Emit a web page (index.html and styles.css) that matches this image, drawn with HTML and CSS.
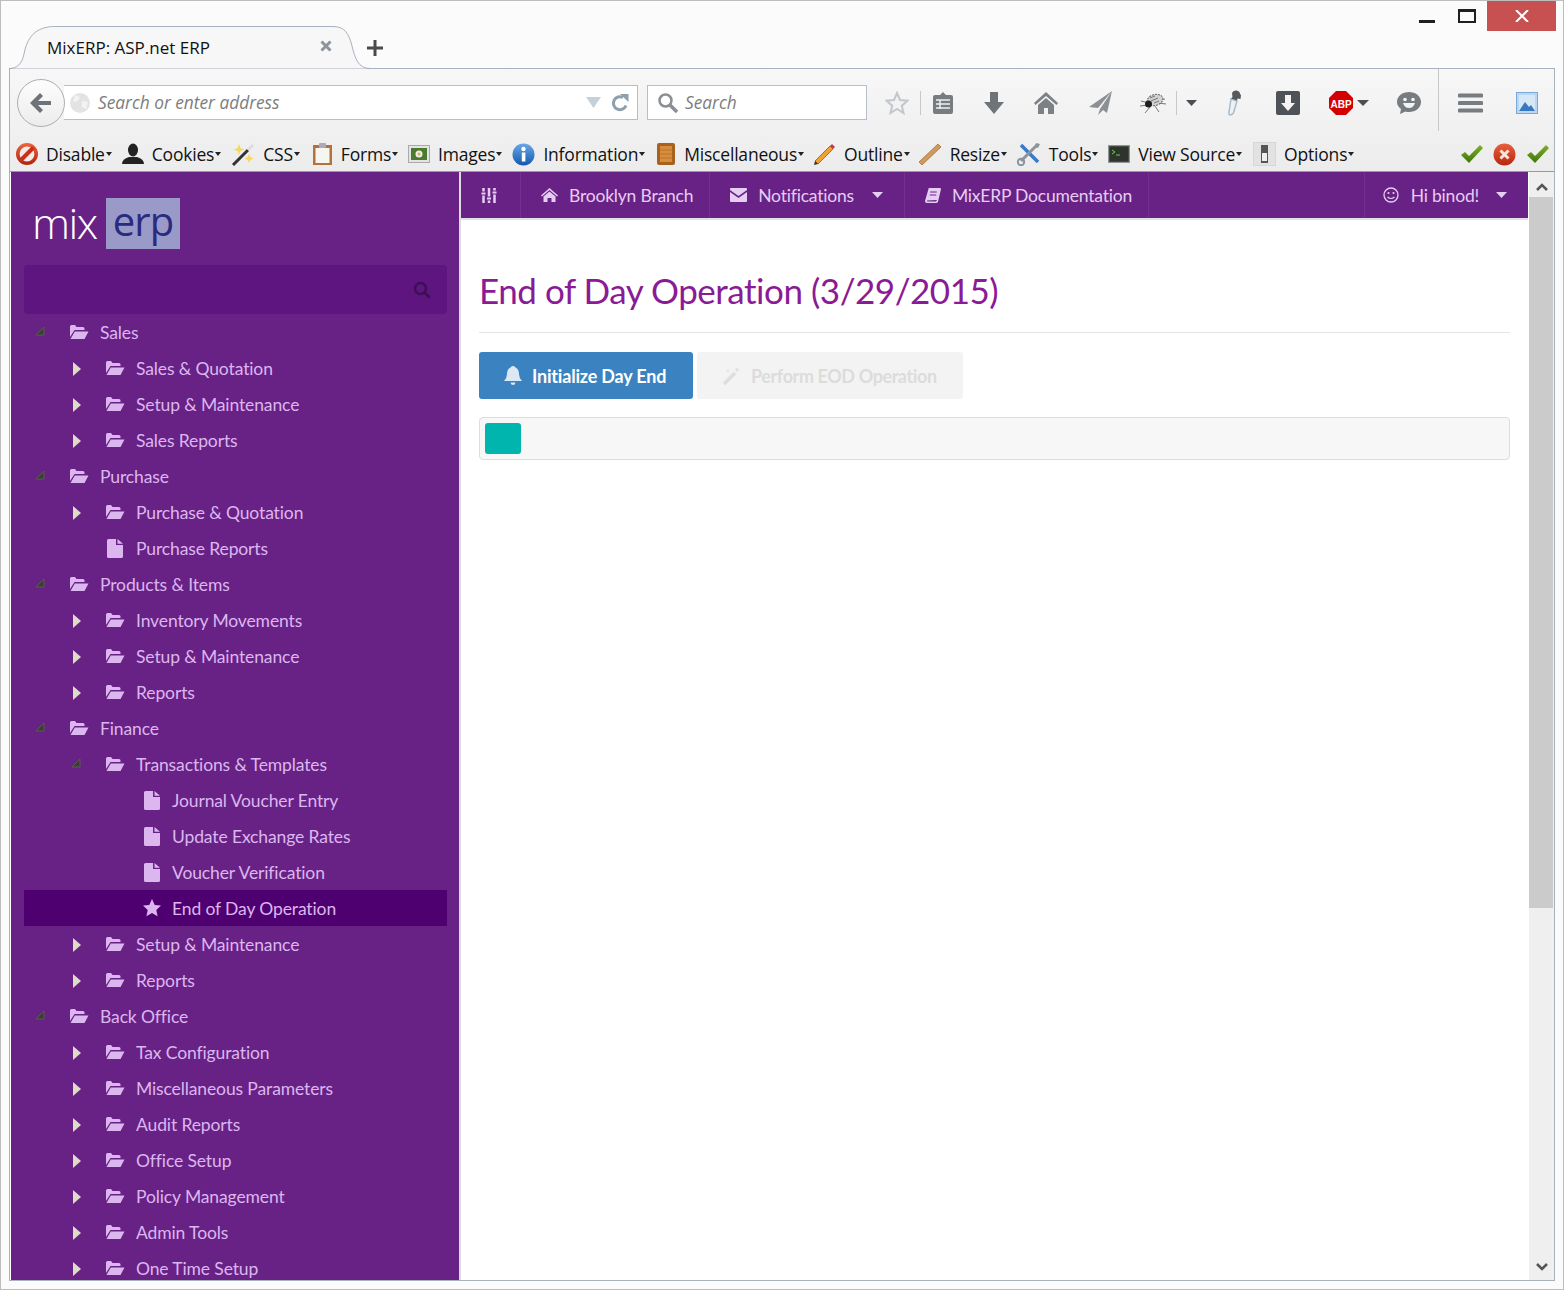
FILE: index.html
```html
<!DOCTYPE html>
<html>
<head>
  <meta charset="UTF-8">
  <title>MixERP: ASP.net ERP</title>
  <link rel="stylesheet" href="styles.css">
</head>
<body>
  <svg class="defs" width="0" height="0">
    <defs>
      <linearGradient id="gloss-blue" x1="0" y1="0" x2="0" y2="1"><stop offset="0" stop-color="#6aa8e6"/><stop offset="1" stop-color="#1258ae"/></linearGradient>
      <linearGradient id="gloss-red" x1="0" y1="0" x2="0" y2="1"><stop offset="0" stop-color="#e8603c"/><stop offset="1" stop-color="#b8260e"/></linearGradient>
      <linearGradient id="gloss-green" x1="0" y1="0" x2="0" y2="1"><stop offset="0" stop-color="#7fb02c"/><stop offset="1" stop-color="#3f7408"/></linearGradient>
    </defs>
    <symbol id="folder" viewBox="0 0 20 16"><path d="M1 13V2.500Q1 1 2.500 1h3.500l1.500 2h6.500Q15.500 3 15.500 4.500V6H5.500L1 13zM1.500 15L5.800 7.500H19.500L15.500 15z" fill="currentColor"/></symbol>
    <symbol id="file" viewBox="0 0 16 19"><path d="M0 1.500Q0 0 1.500 0H9v6h7v11.500Q16 19 14.500 19h-13Q0 19 0 17.500zM10.500 0L16 4.800H10.500z" fill="currentColor"/></symbol>
    <symbol id="arrow" viewBox="0 0 8 14"><path d="M0 0l8 7-8 7z" fill="#dcdcc8"/></symbol>
    <symbol id="open" viewBox="0 0 10 10"><path d="M9 1v8H1z" fill="#3b3b3b" stroke="#5f5a50"/></symbol>
  </svg>
  <div class="window">
    <div class="titlebar">
      <div class="tab">
        <svg class="tab-shape" width="362" height="43" viewBox="0 0 362 43"><path d="M0 42.500C8 42.500 13 38 15 28 18 12 26 .5 46 .5H324C336 .5 340 8 343 20 346 32 349 42.500 361 42.500" fill="#f7f7f7" stroke="#a9b1bc"/></svg>
        <span class="tab-title">MixERP: ASP.net ERP</span>
        <svg class="tab-close" width="12" height="12" viewBox="0 0 12 12"><path d="M1.500 1.500l9 9M10.500 1.500l-9 9" stroke="#8c939b" stroke-width="3"/></svg>
      </div>
      <svg class="tab-new" width="16" height="16" viewBox="0 0 16 16"><path d="M8 0v16M0 8h16" stroke="#4a4a4a" stroke-width="3"/></svg>
      <div class="controls">
        <span class="ctl-min"></span>
        <span class="ctl-max"></span>
        <span class="ctl-close"><svg width="14" height="12" viewBox="0 0 14 12"><path d="M1 0l12 12M13 0L1 12" stroke="#fff" stroke-width="2"/></svg></span>
      </div>
    </div>

    <div class="browser">
      <div class="chrome">
        <div class="navbar">
          <div class="back">
            <svg width="24" height="22" viewBox="0 0 24 22"><path d="M11 1l3 3-5 5h13v4H9l5 5-3 3L1 11z" fill="#6e7378"/></svg>
          </div>
          <div class="urlbar">
            <svg class="globe" width="22" height="22" viewBox="0 0 22 22"><circle cx="11" cy="11" r="10" fill="#e3e3e3"/><path d="M6 3l5 2-2 4-5 1zM13 9l6 1-2 7-4-2z" fill="#f3f3f3"/></svg>
            <span class="hint">Search or enter address</span>
            <svg class="url-drop" width="15" height="11" viewBox="0 0 15 11"><path d="M0 0h15l-7.500 11z" fill="#c5d0d8"/></svg>
            <svg width="18" height="18" viewBox="0 0 18 18"><path d="M15 11.500A6.500 6.500 0 1 1 12 3.500" fill="none" stroke="#8ea0ae" stroke-width="3"/><path d="M9 0h8.500v8z" fill="#8ea0ae"/></svg>
          </div>
          <div class="searchbar">
            <svg width="22" height="22" viewBox="0 0 22 22"><circle cx="8.500" cy="8.500" r="6" fill="none" stroke="#8a8f94" stroke-width="2.500"/><path d="M13 13l7 7" stroke="#8a8f94" stroke-width="3.500"/></svg>
            <span class="hint">Search</span>
          </div>
          <div class="tools">
            <svg class="t-star" width="24" height="24" viewBox="0 0 24 24"><path d="M12 2l3 7 7.500.7-5.700 5 1.700 7.300L12 18l-6.500 4 1.700-7.300-5.700-5L9 9z" fill="#f2f2f2" stroke="#c3c7cb" stroke-width="2"/></svg>
            <span class="t-sep t-sep1"></span>
            <svg class="t-clip" width="22" height="24" viewBox="0 0 22 24"><path d="M3 4h5l3-3 3 3h5q2 0 2 2v15q0 2-2 2H3q-2 0-2-2V6q0-2 2-2z" fill="#777c81"/><path d="M4 9h14M4 13h14M4 17h14M8 9v9" stroke="#f0f0f0" stroke-width="1.500"/></svg>
            <svg class="t-down" width="22" height="22" viewBox="0 0 22 22"><path d="M7 0h8v10h6L11 22 1 10h6z" fill="#6f7479"/></svg>
            <svg class="t-home" width="26" height="22" viewBox="0 0 26 22"><path d="M13 0l12 11-1.500 2L13 4 2.500 13 1 11zM5 13l8-7 8 7v9h-6v-6h-4v6H5z" fill="#7d8186"/></svg>
            <svg class="t-plane" width="24" height="24" viewBox="0 0 24 24"><path d="M23 0L0 16l9 1zM23 0L11 18l-2 6 5-5 4 3z" fill="#8c9095"/></svg>
            <svg class="t-bug" width="26" height="22" viewBox="0 0 26 22"><path d="M1 9l8 2M0 14l8-1M5 21l5-6M25 7l-7 1M26 12l-8-1M19 20l-4-6" stroke="#555" stroke-width=".8" fill="none"/><ellipse cx="15" cy="8" rx="8" ry="5.500" fill="#d2d2d2" stroke="#666" stroke-dasharray="2 1" transform="rotate(-15 15 8)"/><path d="M10 6l5-2M11 9l7-3M14 11l5-2" stroke="#777"/><circle cx="8.500" cy="12" r="3.500" fill="#1e1e1e"/></svg>
            <span class="t-sep t-sep2"></span>
            <svg class="t-caret" width="11" height="6" viewBox="0 0 11 6"><path d="M0 0h11L5.500 6z" fill="#4b4f53"/></svg>
            <svg class="t-drop" width="18" height="26" viewBox="0 0 18 26"><path d="M6 9l6 2-3.500 12q-1.500 2-4 2-1-1-.5-3z" fill="#eef2f5" stroke="#a8bccc" stroke-width="1.500"/><path d="M7 3q1-3 4.500-2.500T15 4l1 1-.5 4-3-.5-.5 2-6-2 1.500-1.500z" fill="#55595e"/></svg>
            <svg class="t-box" width="24" height="24" viewBox="0 0 24 24"><rect width="24" height="24" rx="2" fill="#4f5256"/><path d="M9 4h6v8h4l-7 8-7-8h4z" fill="#f4f4f4"/></svg>
            <svg class="t-abp" width="26" height="26" viewBox="0 0 26 26"><path d="M8 1h10l7 7v10l-7 7H8l-7-7V8z" fill="#d40000"/><text x="13" y="17.500" text-anchor="middle" class="abp-text">ABP</text></svg>
            <svg class="t-caret t-caret2" width="12" height="6" viewBox="0 0 12 6"><path d="M0 0h12L6 6z" fill="#4b4f53"/></svg>
            <svg class="t-chat" width="24" height="24" viewBox="0 0 24 24"><path d="M12 1c6.500 0 12 4 12 10s-5.500 10-12 10q-2 0-3.500-.5L3 23l1-5Q0 15 0 11C0 5 5.500 1 12 1z" fill="#777c81"/><circle cx="8" cy="8.500" r="1.800" fill="#f3f3f3"/><circle cx="16" cy="8.500" r="1.800" fill="#f3f3f3"/><path d="M6 12h12q-1.500 5-6 5t-6-5z" fill="#f3f3f3"/></svg>
            <span class="t-sep t-sep3"></span>
            <svg class="t-menu" width="25" height="20" viewBox="0 0 25 20"><path d="M1.500 2.500h22M1.500 10h22M1.500 17.500h22" stroke="#777c81" stroke-width="4" stroke-linecap="round"/></svg>
            <svg class="t-pic" width="22" height="22" viewBox="0 0 22 22"><rect x=".5" y=".5" width="21" height="21" fill="#b9d6f2" stroke="#7da7d8"/><rect x="3" y="3" width="16" height="16" fill="#d6e8f8"/><path d="M3 19l6-9 4 5 2-2 4 6z" fill="#3a79c2"/></svg>
          </div>
        </div>

        <div class="addons">
          <span class="addon">
            <svg width="22" height="22" viewBox="0 0 22 22"><circle cx="11" cy="11" r="9.200" fill="#f1ebe6" stroke="url(#gloss-red)" stroke-width="3.600"/><path d="M4.500 17.500L17.500 4.500" stroke="#c8321c" stroke-width="4"/></svg>
            <span class="addon-text">Disable</span>
          </span>
          <span class="addon">
            <svg width="22" height="22" viewBox="0 0 22 22"><ellipse cx="11" cy="7" rx="5" ry="6.500" fill="#222"/><path d="M0 21q0-5 7-7h8q7 2 7 7z" fill="#222"/></svg>
            <span class="addon-text">Cookies</span>
          </span>
          <span class="addon">
            <svg width="24" height="24" viewBox="0 0 24 24"><path d="M2 23L17 8" stroke="#333" stroke-width="3"/><path d="M17 8l5-5" stroke="#ddd" stroke-width="3"/><path d="M8 2l1.500 4 4 1.500-4 1.500L8 13l-1.500-4-4-1.500 4-1.500zM18 12l1.500 3 3 1.500-3 1.500-1.500 3-1.500-3-3-1.500 3-1.500z" fill="#f6d860"/></svg>
            <span class="addon-text">CSS</span>
          </span>
          <span class="addon">
            <svg width="21" height="24" viewBox="0 0 21 24"><rect x="1" y="3" width="19" height="20" fill="#b7703a"/><rect x="3.500" y="6" width="14" height="15" fill="#f6f6f0"/><rect x="7" y="1" width="7" height="5" rx="1" fill="#aab"/></svg>
            <span class="addon-text">Forms</span>
          </span>
          <span class="addon">
            <svg width="22" height="18" viewBox="0 0 22 18"><rect x=".5" y=".5" width="21" height="17" fill="#e4e4e4" stroke="#aaa"/><rect x="3" y="3" width="16" height="12" fill="#4c7a2e"/><circle cx="11" cy="9" r="3.500" fill="#eee"/><circle cx="11" cy="9" r="1.500" fill="#e0b030"/></svg>
            <span class="addon-text">Images</span>
          </span>
          <span class="addon">
            <svg width="23" height="23" viewBox="0 0 23 23"><circle cx="11.500" cy="11.500" r="11" fill="url(#gloss-blue)"/><rect x="9.800" y="9.500" width="3.600" height="9" fill="#fff"/><circle cx="11.500" cy="6" r="2.200" fill="#fff"/></svg>
            <span class="addon-text">Information</span>
          </span>
          <span class="addon">
            <svg width="20" height="24" viewBox="0 0 20 24"><rect x="1" y="1" width="18" height="22" rx="2" fill="#a8621f"/><rect x="4" y="4" width="12" height="16" fill="#d98c3c"/><path d="M4 8h12M4 12h12M4 16h12" stroke="#b9742c"/></svg>
            <span class="addon-text">Miscellaneous</span>
          </span>
          <span class="addon">
            <svg width="24" height="24" viewBox="0 0 24 24"><path d="M3 19L18 4l3 3L6 22z" fill="#f0a030" stroke="#b87010"/><path d="M18 4l2-2 3 3-2 2z" fill="#c03a4a"/><path d="M3 19l3 3-4 1z" fill="#333"/></svg>
            <span class="addon-text">Outline</span>
          </span>
          <span class="addon">
            <svg width="24" height="24" viewBox="0 0 24 24"><path d="M1 20L20 2l3 3L4 23z" fill="#cf9a5e" stroke="#a8743c" stroke-width=".8"/></svg>
            <span class="addon-text">Resize</span>
          </span>
          <span class="addon">
            <svg width="24" height="24" viewBox="0 0 24 24"><path d="M4 3l17 17" stroke="#3a7ac8" stroke-width="3.500"/><path d="M20 3L4 19" stroke="#8b949c" stroke-width="3"/><circle cx="4" cy="20" r="3.200" fill="none" stroke="#8b949c" stroke-width="2"/><path d="M19 1l4 1-2 4-3-1z" fill="#8b949c"/></svg>
            <span class="addon-text">Tools</span>
          </span>
          <span class="addon">
            <svg width="22" height="18" viewBox="0 0 22 18"><rect x=".5" y=".5" width="21" height="17" fill="#2c342c" stroke="#8f9391" stroke-width="1.500"/><path d="M4 5l3 2-3 2M8 10h4" stroke="#6fcf4a" fill="none"/></svg>
            <span class="addon-text">View Source</span>
          </span>
          <span class="addon">
            <svg width="23" height="24" viewBox="0 0 23 24"><rect width="23" height="24" fill="#e2e2e2" stroke="#ccc"/><rect x="8" y="3" width="7" height="18" fill="#555"/><rect x="9" y="11" width="5" height="8" fill="#eee"/></svg>
            <span class="addon-text">Options</span>
          </span>
          <span class="addon-end">
            <svg width="23" height="20" viewBox="0 0 23 20"><path d="M1 11l4-3 4 4L20 1l3 3L9 19z" fill="url(#gloss-green)"/></svg>
            <svg width="23" height="23" viewBox="0 0 23 23"><circle cx="11.500" cy="11.500" r="11" fill="url(#gloss-red)"/><path d="M7.500 7.500l8 8M15.500 7.500l-8 8" stroke="#f6e6e0" stroke-width="3"/></svg>
            <svg width="23" height="20" viewBox="0 0 23 20"><path d="M1 11l4-3 4 4L20 1l3 3L9 19z" fill="url(#gloss-green)"/></svg>
          </span>
        </div>
      </div>

      <div class="content">
        <aside class="sidebar">
          <div class="logo"><span class="logo-mix">mix</span><span class="logo-erp">erp</span></div>
          <div class="side-search">
            <svg width="18" height="18" viewBox="0 0 18 18"><circle cx="7.500" cy="7.500" r="5.500" fill="none" stroke="#3e0f56" stroke-width="2.500"/><path d="M11.500 11.500l5 5" stroke="#3e0f56" stroke-width="3"/></svg>
          </div>
          <ul class="tree">
            <li class="row"><svg class="tog tog-open"><use href="#open"/></svg><svg class="ico"><use href="#folder"/></svg><span>Sales</span></li>
            <li class="row lv1"><svg class="tog"><use href="#arrow"/></svg><svg class="ico"><use href="#folder"/></svg><span>Sales &amp; Quotation</span></li>
            <li class="row lv1"><svg class="tog"><use href="#arrow"/></svg><svg class="ico"><use href="#folder"/></svg><span>Setup &amp; Maintenance</span></li>
            <li class="row lv1"><svg class="tog"><use href="#arrow"/></svg><svg class="ico"><use href="#folder"/></svg><span>Sales Reports</span></li>
            <li class="row"><svg class="tog tog-open"><use href="#open"/></svg><svg class="ico"><use href="#folder"/></svg><span>Purchase</span></li>
            <li class="row lv1"><svg class="tog"><use href="#arrow"/></svg><svg class="ico"><use href="#folder"/></svg><span>Purchase &amp; Quotation</span></li>
            <li class="row lv1"><span class="tog"></span><svg class="ico ico-file"><use href="#file"/></svg><span>Purchase Reports</span></li>
            <li class="row"><svg class="tog tog-open"><use href="#open"/></svg><svg class="ico"><use href="#folder"/></svg><span>Products &amp; Items</span></li>
            <li class="row lv1"><svg class="tog"><use href="#arrow"/></svg><svg class="ico"><use href="#folder"/></svg><span>Inventory Movements</span></li>
            <li class="row lv1"><svg class="tog"><use href="#arrow"/></svg><svg class="ico"><use href="#folder"/></svg><span>Setup &amp; Maintenance</span></li>
            <li class="row lv1"><svg class="tog"><use href="#arrow"/></svg><svg class="ico"><use href="#folder"/></svg><span>Reports</span></li>
            <li class="row"><svg class="tog tog-open"><use href="#open"/></svg><svg class="ico"><use href="#folder"/></svg><span>Finance</span></li>
            <li class="row lv1"><svg class="tog tog-open"><use href="#open"/></svg><svg class="ico"><use href="#folder"/></svg><span>Transactions &amp; Templates</span></li>
            <li class="row lv2"><svg class="ico ico-file"><use href="#file"/></svg><span>Journal Voucher Entry</span></li>
            <li class="row lv2"><svg class="ico ico-file"><use href="#file"/></svg><span>Update Exchange Rates</span></li>
            <li class="row lv2"><svg class="ico ico-file"><use href="#file"/></svg><span>Voucher Verification</span></li>
            <li class="row lv2 active"><svg class="ico ico-file ico-star" viewBox="0 0 18 18"><path d="M9 0l2.700 5.900 6.300.7-4.700 4.300 1.300 6.400L9 14l-5.600 3.300 1.300-6.400L0 6.600l6.300-.7z" fill="currentColor"/></svg><span>End of Day Operation</span></li>
            <li class="row lv1"><svg class="tog"><use href="#arrow"/></svg><svg class="ico"><use href="#folder"/></svg><span>Setup &amp; Maintenance</span></li>
            <li class="row lv1"><svg class="tog"><use href="#arrow"/></svg><svg class="ico"><use href="#folder"/></svg><span>Reports</span></li>
            <li class="row"><svg class="tog tog-open"><use href="#open"/></svg><svg class="ico"><use href="#folder"/></svg><span>Back Office</span></li>
            <li class="row lv1"><svg class="tog"><use href="#arrow"/></svg><svg class="ico"><use href="#folder"/></svg><span>Tax Configuration</span></li>
            <li class="row lv1"><svg class="tog"><use href="#arrow"/></svg><svg class="ico"><use href="#folder"/></svg><span>Miscellaneous Parameters</span></li>
            <li class="row lv1"><svg class="tog"><use href="#arrow"/></svg><svg class="ico"><use href="#folder"/></svg><span>Audit Reports</span></li>
            <li class="row lv1"><svg class="tog"><use href="#arrow"/></svg><svg class="ico"><use href="#folder"/></svg><span>Office Setup</span></li>
            <li class="row lv1"><svg class="tog"><use href="#arrow"/></svg><svg class="ico"><use href="#folder"/></svg><span>Policy Management</span></li>
            <li class="row lv1"><svg class="tog"><use href="#arrow"/></svg><svg class="ico"><use href="#folder"/></svg><span>Admin Tools</span></li>
            <li class="row lv1"><svg class="tog"><use href="#arrow"/></svg><svg class="ico"><use href="#folder"/></svg><span>One Time Setup</span></li>
          </ul>
        </aside>

        <main class="main">
          <nav class="topbar">
            <a class="top-item top-settings">
              <svg width="16" height="15" viewBox="0 0 16 15"><path d="M2.500 0v15M8 0v15M13.500 0v15" stroke="currentColor" stroke-width="2.500"/><path d="M0 4h5v3H0zM5.500 9h5v3h-5zM11 3h5v3h-5z" fill="currentColor" stroke="#682286"/></svg>
            </a>
            <a class="top-item">
              <svg width="17" height="14" viewBox="0 0 17 14"><path d="M8.500 0l8.500 7.500-1 1-7.500-6.500L1 8.500l-1-1zM2.500 8.500l6-5 6 5V14h-4v-4h-4v4h-4z" fill="currentColor"/></svg>
              <span>Brooklyn Branch</span>
            </a>
            <a class="top-item">
              <svg width="17" height="14" viewBox="0 0 18 14" preserveAspectRatio="none"><path d="M1 0h16q1 0 1 1v1L9 8 0 2V1q0-1 1-1zM0 4l9 6 9-6v9q0 1-1 1H1q-1 0-1-1z" fill="currentColor"/></svg>
              <span>Notifications</span>
              <svg class="top-caret" width="11" height="6" viewBox="0 0 11 6"><path d="M0 0h11L5.500 6z" fill="currentColor"/></svg>
            </a>
            <a class="top-item">
              <svg width="16" height="15" viewBox="0 0 17 15" preserveAspectRatio="none"><path d="M4 0h12q1 0 1 1l-3 12q0 2-2 2H2q-2 0-2-2zM2 12.500q0 1 1 1h9l.5-1.500z" fill="currentColor" fill-rule="evenodd"/><path d="M5.500 4h7M5 7h7" stroke="#682286"/></svg>
              <span>MixERP Documentation</span>
            </a>
            <a class="top-item top-user">
              <svg width="16" height="16" viewBox="0 0 16 16"><circle cx="8" cy="8" r="7" fill="none" stroke="currentColor" stroke-width="1.300"/><circle cx="5.500" cy="6" r="1.100" fill="currentColor"/><circle cx="10.500" cy="6" r="1.100" fill="currentColor"/><path d="M4.500 10q3.500 3 7 0" fill="none" stroke="currentColor" stroke-width="1.200"/></svg>
              <span>Hi binod!</span>
              <svg class="top-caret" width="11" height="6" viewBox="0 0 11 6"><path d="M0 0h11L5.500 6z" fill="currentColor"/></svg>
            </a>
          </nav>
          <section class="page">
            <h1>End of Day Operation (3/29/2015)</h1>
            <div class="buttons">
              <button class="btn btn-blue">
                <svg width="18" height="19" viewBox="0 0 18 19"><path d="M9 0q2 0 2.500 1.500Q15 3 15 8q0 4 3 7H0q3-3 3-7 0-5 3.500-6.500Q7 0 9 0zM6.500 16.500h5Q11 19 9 19t-2.500-2.500z" fill="#dce9f5"/></svg>
                Initialize Day End
              </button>
              <button class="btn btn-off">
                <svg width="18" height="18" viewBox="0 0 18 18"><path d="M1 17L12 6" stroke="#dedede" stroke-width="3.500"/><path d="M14 0l.8 2 2 .8-2 .8-.8 2-.8-2-2-.8 2-.8zM5 2l.5 1.500L7 4l-1.500.5L5 6l-.5-1.500L3 4l1.500-.5z" fill="#dedede"/></svg>
                Perform EOD Operation
              </button>
            </div>
            <div class="well"><span class="teal"></span></div>
          </section>
        </main>

        <div class="scrollbar">
          <svg class="sb-up" width="12" height="8" viewBox="0 0 12 8"><path d="M1 7l5-5 5 5" fill="none" stroke="#555" stroke-width="2.500"/></svg>
          <div class="sb-thumb"></div>
          <svg class="sb-down" width="12" height="8" viewBox="0 0 12 8"><path d="M1 1l5 5 5-5" fill="none" stroke="#555" stroke-width="2.500"/></svg>
        </div>
      </div>
    </div>
  </div>
</body>
</html>
```

FILE: styles.css
```css
* {
  box-sizing: border-box;
}

body {
  margin: 0;
  font-family: "Open Sans", "Liberation Sans", sans-serif;
  overflow: hidden;
}

.defs {
  display: block;
  height: 0;
}

.window {
  width: 1564px;
  height: 1290px;
  border: 1px solid #bdbdbd;
  background: #fbfbfb;
  display: flex;
  flex-direction: column;
}

/* title bar and tab */
.titlebar {
  height: 67px;
  display: flex;
  align-items: flex-start;
  flex: none;
  padding-left: 8px;
}

.tab {
  position: relative;
  width: 362px;
  height: 43px;
  margin-top: 25px;
  display: flex;
  align-items: center;
  padding-left: 38px;
  z-index: 1;
}

.tab-shape {
  position: absolute;
  left: 0;
  top: 0;
}

.tab-title {
  position: relative;
  font-size: 17px;
  color: #111;
  width: 273px;
}

.tab-close {
  position: relative;
  margin-top: -3px;
}

.tab-new {
  margin: 39px 0 0 -4px;
}

.controls {
  margin-left: auto;
  display: flex;
  height: 30px;
  margin-right: 7px;
}

.ctl-min {
  width: 16px;
  height: 3px;
  background: #1f1f1f;
  margin: 19px 0 0 0;
}

.ctl-max {
  width: 18px;
  height: 14px;
  border: 2px solid #1f1f1f;
  border-top-width: 3px;
  margin: 8px 11px 0 23px;
}

.ctl-close {
  width: 69px;
  height: 30px;
  background: #c75050;
  display: flex;
  align-items: center;
  justify-content: center;
}

/* browser frame */
.browser {
  flex: 1;
  margin: 0 8px 8px 8px;
  border: 1px solid #a8b1bc;
  display: flex;
  flex-direction: column;
  min-height: 0;
}

.chrome {
  flex: none;
  height: 103px;
  background: linear-gradient(#f7f7f7, #ececec);
  border-bottom: 1px solid #999;
}

.navbar {
  height: 62px;
  display: flex;
  align-items: center;
  padding-left: 7px;
  padding-top: 5px;
}

.back {
  width: 48px;
  height: 48px;
  border-radius: 50%;
  border: 1px solid #a9afb6;
  background: linear-gradient(#fdfdfd, #ececec);
  display: flex;
  align-items: center;
  justify-content: center;
  position: relative;
  z-index: 1;
  flex: none;
}

.urlbar,
.searchbar {
  height: 35px;
  background: #fff;
  border: 1px solid #b6bfc9;
  display: flex;
  align-items: center;
  flex: none;
}

.urlbar {
  width: 574px;
  margin-left: -1px;
  padding: 0 8px 0 5px;
  border-left: none;
}

.globe {
  flex: none;
}

.hint {
  font-size: 17.300px;
  font-style: italic;
  color: #7d7d7d;
}

.urlbar .hint {
  margin-left: 7px;
}

.url-drop {
  margin-left: auto;
  margin-right: 10px;
}

.searchbar {
  width: 220px;
  margin-left: 9px;
  padding-left: 9px;
}

.searchbar .hint {
  margin-left: 6px;
}

.tools {
  display: flex;
  align-items: center;
  flex: none;
}

.t-star { margin-left: 18px; }
.t-sep { width: 1px; height: 24px; background: #c6c9cc; flex: none; }
.t-sep1 { margin-left: 11px; }
.t-clip { margin-left: 11px; }
.t-down { margin-left: 29px; }
.t-home { margin-left: 28px; }
.t-plane { margin-left: 30px; }
.t-bug { margin-left: 27px; }
.t-sep2 { margin-left: 10px; }
.t-caret { margin-left: 9px; }
.t-drop { margin-left: 28px; }
.t-box { margin-left: 33px; }
.t-abp { margin-left: 28px; }
.t-caret2 { margin-left: 3px; }
.t-chat { margin-left: 28px; }
.t-sep3 { height: 62px; margin-left: 17px; margin-top: -5px; }
.t-menu { margin-left: 19px; }
.t-pic { margin-left: 33px; }

.abp-text {
  font: bold 10px "Liberation Sans", sans-serif;
  fill: #fff;
}

.addons {
  height: 40px;
  display: flex;
  align-items: center;
  padding: 6px 5px 0 6px;
  color: #111;
}

.addon {
  display: flex;
  align-items: center;
  gap: 8px;
  margin-right: 10px;
  flex: none;
}

.addon:nth-child(3) { margin-right: 12px; }
.addon:nth-child(6) { margin-right: 11px; }
.addon:nth-child(7) { margin-right: 8px; }
.addon:nth-child(8) { margin-right: 8px; }
.addon:nth-child(11) { margin-right: 11px; }

.addon-text {
  font-size: 17.500px;
  letter-spacing: -0.200px;
  display: flex;
  align-items: center;
}

.addon-text::after {
  content: "";
  border: 3px solid transparent;
  border-top: 4px solid #222;
  border-bottom: none;
  margin-left: 1px;
}

.addon-end {
  margin-left: auto;
  display: flex;
  align-items: center;
  gap: 10px;
}

/* page area */
.content {
  flex: 1;
  min-height: 0;
  display: flex;
  padding-left: 1px;
  background: #fff;
}

.sidebar {
  width: 450px;
  flex: none;
  background: #682286;
  border-right: 2px solid #dcdce0;
  overflow: hidden;
  padding: 26px 12px 0 13px;
  color: #dcb6ef;
  font-family: "Lato", "Open Sans", sans-serif;
}

.logo {
  display: flex;
  align-items: stretch;
  height: 51px;
  padding-left: 8px;
  font-family: "Open Sans", sans-serif;
}

.logo-mix {
  color: #fff;
  width: 74px;
  font-size: 43px;
  font-weight: 300;
  letter-spacing: -1.500px;
  line-height: 50px;
}

.logo-erp {
  background: #9a9ac8;
  color: #2a2a80;
  width: 74px;
  font-size: 40px;
  text-align: center;
  letter-spacing: -1px;
  line-height: 46px;
}

.side-search {
  height: 49px;
  margin-top: 16px;
  background: #5e1580;
  border-radius: 4px;
  display: flex;
  align-items: center;
  justify-content: flex-end;
  padding-right: 16px;
}

.tree {
  list-style: none;
  margin: 0;
  padding: 0;
  font-size: 17.500px;
  letter-spacing: -0.120px;
}

.row {
  height: 36px;
  display: flex;
  align-items: center;
  padding-left: 11px;
}

.row.lv1 {
  padding-left: 47px;
}

.row.lv2 {
  padding-left: 84px;
}

.tog {
  width: 10px;
  height: 14px;
  flex: none;
  margin-right: 24px;
  margin-top: 2px;
}

.tog-open {
  height: 10px;
  margin-top: -2px;
}

.lv1 .tog:not(.tog-open) {
  margin-left: 1px;
  margin-right: 23px;
}

.ico {
  width: 20px;
  height: 16px;
  flex: none;
  margin-right: 11px;
  margin-top: -1px;
}

.ico-file {
  width: 16px;
  height: 19px;
  margin-left: 36px;
  margin-right: 12px;
  margin-top: 0;
}

.ico-star {
  width: 18px;
  height: 18px;
  margin-left: 35px;
  margin-right: 11px;
}

.lv1 .ico-file {
  margin-left: 2px;
  margin-right: 13px;
}

.active {
  background: #4f0070;
}

.main {
  flex: 1;
  min-width: 0;
  display: flex;
  flex-direction: column;
}

.topbar {
  height: 48px;
  flex: none;
  display: flex;
  margin-right: 1px;
  background: #682286;
  border-bottom: 2px solid #e2e0e6;
  color: #e6cdf2;
  font-family: "Lato", "Open Sans", sans-serif;
  font-size: 17.500px;
  letter-spacing: -0.200px;
}

.top-item {
  display: flex;
  align-items: center;
  gap: 11px;
  padding: 0 16px 0 20px;
  border-right: 1px solid #73308f;
  color: inherit;
}

.top-settings {
  width: 60px;
}

.top-caret {
  margin-left: 7px;
  margin-right: 5px;
}

.top-user {
  margin-left: auto;
  border-right: none;
  border-left: 1px solid #73308f;
  padding: 0 16px 0 18px;
  gap: 12px;
}

.top-user .top-caret {
  margin-left: 5px;
}

.page {
  padding: 0 19px 0 18px;
}

h1 {
  margin: 47px 0 0;
  padding-top: 2px;
  height: 66px;
  font-family: "Lato", "Open Sans", sans-serif;
  font-weight: 400;
  font-size: 35px;
  letter-spacing: -0.470px;
  color: #8a1a96;
  border-bottom: 1px solid #e4e4e4;
}

.buttons {
  display: flex;
  gap: 4px;
  margin-top: 19px;
}

.btn {
  height: 47px;
  border: none;
  border-radius: 3px;
  display: flex;
  align-items: center;
  gap: 10px;
  font-family: "Lato", "Open Sans", sans-serif;
  font-size: 18px;
  padding: 0;
}

.btn-blue {
  width: 214px;
  padding-left: 25px;
  background: #3b82c0;
  color: #fff;
  font-weight: 700;
  letter-spacing: -0.200px;
}

.btn-off {
  width: 266px;
  padding-left: 26px;
  background: #f3f3f3;
  color: #dcdcdc;
  font-weight: 700;
  letter-spacing: -0.400px;
}

.well {
  margin-top: 18px;
  height: 43px;
  background: #f7f7f7;
  border: 1px solid #ddd;
  border-radius: 4px;
  padding: 5px;
  display: flex;
}

.teal {
  width: 36px;
  height: 31px;
  border-radius: 3px;
  background: #00b5ad;
}

.scrollbar {
  width: 25px;
  flex: none;
  background: #efefef;
  display: flex;
  flex-direction: column;
  align-items: center;
}

.sb-up {
  margin-top: 11px;
  flex: none;
}

.sb-thumb {
  width: 24px;
  height: 711px;
  margin-top: 6px;
  background: #cbcbcb;
  flex: none;
  align-self: flex-start;
}

.sb-down {
  margin-top: auto;
  margin-bottom: 9px;
  flex: none;
}
```
